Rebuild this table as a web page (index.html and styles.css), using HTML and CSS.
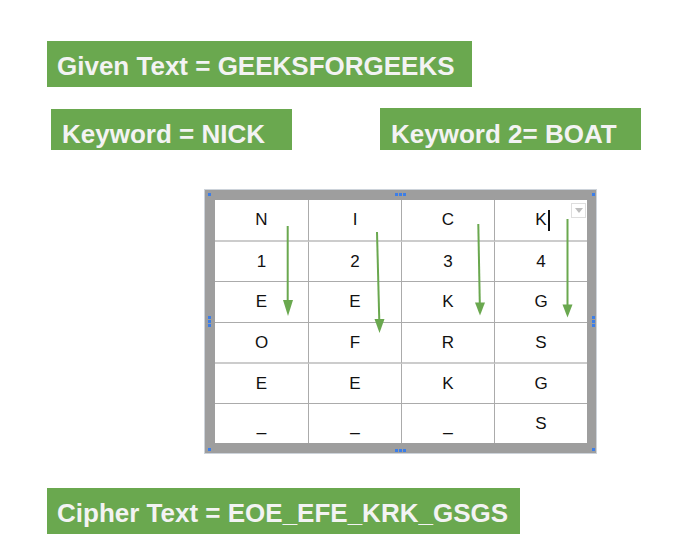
FILE: index.html
```html
<!DOCTYPE html>
<html lang="en">
<head>
<meta charset="utf-8">
<title>Columnar Cipher</title>
<link rel="stylesheet" href="styles.css">
</head>
<body>
<main class="page">
  <div class="label label-given">Given Text = GEEKSFORGEEKS</div>
  <div class="keys">
    <div class="label label-k1">Keyword = NICK</div>
    <div class="label label-k2">Keyword 2= BOAT</div>
  </div>
  <div class="frame">
    <div class="grid">
      <div class="cell row-soft">N</div>
      <div class="cell row-soft">I</div>
      <div class="cell row-soft">C</div>
      <div class="cell row-soft cell-active"><span class="cursor-host">K<span class="caret"></span></span><span class="dropdown"><span class="tri"></span></span></div>
      <div class="cell">1</div>
      <div class="cell">2</div>
      <div class="cell">3</div>
      <div class="cell">4</div>
      <div class="cell">E</div>
      <div class="cell">E</div>
      <div class="cell">K</div>
      <div class="cell">G</div>
      <div class="cell row-soft">O</div>
      <div class="cell row-soft">F</div>
      <div class="cell row-soft">R</div>
      <div class="cell row-soft">S</div>
      <div class="cell">E</div>
      <div class="cell">E</div>
      <div class="cell">K</div>
      <div class="cell">G</div>
      <div class="cell cell-low">_</div>
      <div class="cell cell-low">_</div>
      <div class="cell cell-low">_</div>
      <div class="cell">S</div>
    </div>
    <svg class="arrows" viewBox="204 189 393 265" width="393" height="265" aria-hidden="true">
      <g stroke="#6aa84f" stroke-width="2" fill="none">
        <line x1="287.7" y1="226" x2="287.7" y2="302"/>
        <line x1="377" y1="232" x2="379.3" y2="321"/>
        <line x1="478.3" y1="224" x2="479.8" y2="304"/>
        <line x1="567.5" y1="219" x2="567.5" y2="306"/>
      </g>
      <g fill="#6aa84f">
        <polygon points="283,300 293,300 288,316"/>
        <polygon points="374.5,319 384.5,319 379.5,333"/>
        <polygon points="475,302.5 485,302.5 480,315.5"/>
        <polygon points="562.5,304.5 572.5,304.5 567.5,317.5"/>
      </g>
    </svg>
    <span class="handle h-tl"></span>
    <span class="handle h-tr"></span>
    <span class="handle h-bl"></span>
    <span class="handle h-br"></span>
    <span class="dots dots-h h-tm"><i></i><i></i><i></i></span>
    <span class="dots dots-h h-bm"><i></i><i></i><i></i></span>
    <span class="dots dots-v h-lm"><i></i><i></i><i></i></span>
    <span class="dots dots-v h-rm"><i></i><i></i><i></i></span>
  </div>
  <div class="label label-cipher">Cipher Text = EOE_EFE_KRK_GSGS</div>
</main>
</body>
</html>
```
FILE: styles.css
```css
html, body {
  margin: 0;
  padding: 0;
  background: #ffffff;
}

.page {
  display: flex;
  flex-direction: column;
  align-items: flex-start;
  padding-top: 41px;
  font-family: "Liberation Sans", Arial, sans-serif;
}

.label {
  box-sizing: border-box;
  background: #6aa84f;
  color: #f3f3f3;
  font-weight: bold;
  font-size: 26px;
  line-height: 30px;
  white-space: nowrap;
}

.label-given {
  margin-left: 47px;
  width: 425px;
  height: 46px;
  padding: 10px 0 0 10px;
}

.keys {
  display: flex;
  align-items: flex-start;
  margin-top: 21px;
}

.label-k1 {
  margin-left: 51px;
  margin-top: 1px;
  width: 241px;
  height: 41px;
  padding: 10px 0 0 11px;
}

.label-k2 {
  margin-left: 88px;
  width: 261px;
  height: 42px;
  padding: 11px 0 0 11px;
}

.label-cipher {
  margin-top: 34px;
  margin-left: 47px;
  width: 473px;
  height: 46px;
  padding: 10px 0 0 10px;
}

.frame {
  position: relative;
  box-sizing: border-box;
  margin-top: 39px;
  margin-left: 204px;
  width: 393px;
  height: 265px;
  border: 1px solid #cdd3da;
  background: #9e9e9e;
  padding: 10px 9px 10px 10px;
}

.grid {
  display: grid;
  grid-template-columns: 94px 93px 93px 92px;
  grid-template-rows: 42px 40px 41px 41px 40px 39px;
  background: #ffffff;
}

.cell {
  position: relative;
  box-sizing: border-box;
  display: flex;
  align-items: center;
  justify-content: center;
  border-right: 1px solid #ababab;
  border-bottom: 1px solid #ababab;
  font-size: 17px;
  color: #111111;
}

.cell.row-soft {
  border-bottom: 2px solid #cccccc;
}

.cell:nth-child(4n) {
  border-right: none;
}

.cell:nth-last-child(-n+4) {
  border-bottom: none;
}

.cell-low {
  padding-top: 4px;
}

.cursor-host {
  position: relative;
  display: inline-block;
  line-height: 20px;
}

.caret {
  position: absolute;
  left: 100%;
  top: 0;
  margin-left: 1px;
  width: 2px;
  height: 21px;
  background: #111111;
}

.dropdown {
  position: absolute;
  top: 3px;
  right: 1px;
  box-sizing: border-box;
  width: 15px;
  height: 15px;
  border: 1px solid #dedede;
  background: #ffffff;
  display: flex;
  align-items: center;
  justify-content: center;
}

.tri {
  width: 0;
  height: 0;
  border-left: 4px solid transparent;
  border-right: 4px solid transparent;
  border-top: 5px solid #bdbdbd;
}

.arrows {
  position: absolute;
  left: -1px;
  top: -1px;
  pointer-events: none;
}

.handle {
  position: absolute;
  width: 3px;
  height: 3px;
  background: #3c7ee8;
}

.h-tl { left: 3px; top: 3px; }
.h-tr { left: 387px; top: 3px; }
.h-bl { left: 3px; top: 258px; }
.h-br { left: 387px; top: 258px; }

.dots {
  position: absolute;
  display: flex;
  gap: 1px;
}

.dots i {
  display: block;
  width: 3px;
  height: 3px;
  background: #3c7ee8;
}

.dots-v {
  flex-direction: column;
}

.h-tm { left: 190px; top: 3px; }
.h-bm { left: 190px; top: 259px; }
.h-lm { left: 3px; top: 126px; }
.h-rm { left: 387px; top: 126px; }
```
